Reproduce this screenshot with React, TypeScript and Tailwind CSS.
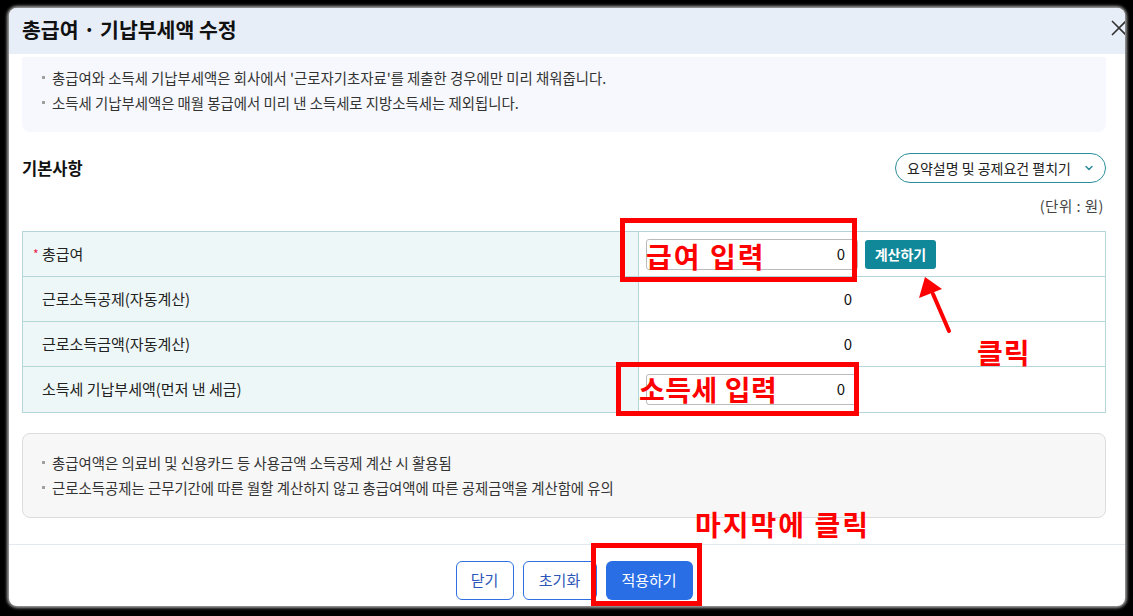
import React from "react";

const FONT = { fontFamily: '"Noto Sans CJK KR", "Noto Sans", "Liberation Sans", sans-serif' };

function Bullet({ children }: { children: React.ReactNode }) {
  return (
    <div className="flex items-center h-[25px] text-[14.4px] text-[#333]">
      <span className="inline-block w-[3px] h-[3px] bg-[#a0a0a0] mr-[7px]" />
      <span>{children}</span>
    </div>
  );
}

function Row({ label, required, children, last }: { label: string; required?: boolean; children: React.ReactNode; last?: boolean }) {
  return (
    <div className={"flex h-[45px] " + (last ? "" : "border-b border-[#b4d6db]")}>
      <div className="w-[616px] bg-[#eef7f7] border-r border-[#b4d6db] flex items-center pl-[10px] text-[15px] text-[#222]">
        {required ? <span className="text-[#e8174a] text-[12px] mr-[2px] w-[7px]">*</span> : <span className="w-[9px]" />}
        <span>{label}</span>
      </div>
      <div className="flex items-center pl-[7px]">{children}</div>
    </div>
  );
}

export default function App() {
  return (
    <div className="relative w-[1133px] h-[616px] bg-black overflow-hidden" style={FONT}>
      <div className="absolute left-[9px] top-[8px] w-[1116px] h-[598px] bg-white rounded-[8px] overflow-hidden shadow-[0_0_3px_2px_rgba(230,230,230,0.7)] flex flex-col">
        {/* header */}
        <div className="relative h-[46px] shrink-0 bg-[#e7eef8] flex items-center pl-[13px] pb-[4px]">
          <span className="text-[20.5px] font-bold text-[#111]">총급여 · 기납부세액 수정</span>
          <svg className="absolute right-[-3px] top-[11px]" width="18" height="18" viewBox="0 0 18 18">
            <path d="M2 2 L16 16 M16 2 L2 16" stroke="#333" strokeWidth="1.6" fill="none" />
          </svg>
        </div>

        <div className="pl-[13px] pr-[19px]">
          {/* info box */}
          <div className="mt-[3px] h-[75px] bg-[#f6f8fd] rounded-b-[8px] pt-[8px] pl-[20px]">
            <Bullet>총급여와 소득세 기납부세액은 회사에서 '근로자기초자료'를 제출한 경우에만 미리 채워줍니다.</Bullet>
            <Bullet>소득세 기납부세액은 매월 봉급에서 미리 낸 소득세로 지방소득세는 제외됩니다.</Bullet>
          </div>

          {/* section title */}
          <div className="mt-[21px] h-[30px] flex items-center justify-between">
            <span className="text-[16.5px] font-bold text-[#111]">기본사항</span>
            <div className="h-[30px] w-[211px] border border-[#2a8c99] rounded-full flex items-center pl-[11px] pr-[10px] justify-between text-[14px] text-[#222]">
              <span>요약설명 및 공제요건 펼치기</span>
              <svg width="12" height="12" viewBox="0 0 12 12">
                <path d="M3 4.5 L6 7.5 L9 4.5" stroke="#2a8c99" strokeWidth="1.5" fill="none" strokeLinecap="round" strokeLinejoin="round" />
              </svg>
            </div>
          </div>

          <div className="mt-[13px] h-[20px] leading-[20px] text-right pr-[2px] text-[14.5px] text-[#444] tracking-[0.5px]">(단위 : 원)</div>

          {/* table */}
          <div className="mt-[15px] border border-[#b4d6db]">
            <Row label="총급여" required>
              <div className="w-[212px] h-[31px] border border-[#bbbbbb] rounded-[3px] flex items-center justify-end pr-[12px] text-[15px] text-[#111]">0</div>
              <div className="ml-[7px] w-[71px] h-[29px] bg-[#11879a] rounded-[3px] flex items-center justify-center text-[14px] font-bold text-white">계산하기</div>
            </Row>
            <Row label="근로소득공제(자동계산)">
              <div className="w-[212px] text-right pr-[6px] text-[15px] text-[#111]">0</div>
            </Row>
            <Row label="근로소득금액(자동계산)">
              <div className="w-[212px] text-right pr-[6px] text-[15px] text-[#111]">0</div>
            </Row>
            <Row label="소득세 기납부세액(먼저 낸 세금)" last>
              <div className="w-[212px] h-[31px] border border-[#bbbbbb] rounded-[3px] flex items-center justify-end pr-[12px] text-[15px] text-[#111]">0</div>
            </Row>
          </div>

          {/* notes */}
          <div className="mt-[20px] h-[85px] border border-[#dcdcdc] bg-[#f7f7f7] rounded-[8px] pt-[16px] pl-[19px]">
            <Bullet>총급여액은 의료비 및 신용카드 등 사용금액 소득공제 계산 시 활용됨</Bullet>
            <Bullet>근로소득공제는 근무기간에 따른 월할 계산하지 않고 총급여액에 따른 공제금액을 계산함에 유의</Bullet>
          </div>
        </div>

        {/* footer */}
        <div className="mt-[26px] border-t border-[#e3e7ee] pt-[16px] flex justify-center pl-[14px] gap-[9px]">
          <div className="w-[58px] h-[39px] border border-[#2f6fe0] rounded-[6px] flex items-center justify-center text-[15px] text-[#2b55b8]">닫기</div>
          <div className="w-[74px] h-[39px] border border-[#2f6fe0] rounded-[6px] flex items-center justify-center text-[15px] text-[#2b55b8]">초기화</div>
          <div className="w-[87px] h-[39px] bg-[#2a6ee6] rounded-[6px] flex items-center justify-center text-[15px] text-white">적용하기</div>
        </div>
      </div>

      {/* red annotations */}
      <div className="absolute left-[620px] top-[218px] w-[237px] h-[64px] border-[5px] border-[#ff0000]" />
      <div className="absolute left-[646px] top-[242px] text-[28px] leading-none font-bold text-[#ff0000] tracking-[2px]">급여 입력</div>
      <div className="absolute left-[616px] top-[362px] w-[243px] h-[54px] border-[5px] border-[#ff0000]" />
      <div className="absolute left-[639px] top-[375px] text-[28px] leading-none font-bold text-[#ff0000] tracking-[0.5px]">소득세 입력</div>
      <div className="absolute left-[977px] top-[338px] text-[28px] leading-none font-bold text-[#ff0000] tracking-[1px]">클릭</div>
      <div className="absolute left-[695px] top-[510px] text-[28px] leading-none font-bold text-[#ff0000] tracking-[2px]">마지막에 클릭</div>
      <div className="absolute left-[591px] top-[543px] w-[111px] h-[63px] border-[5px] border-[#ff0000]" />
      <svg className="absolute left-0 top-0" width="1133" height="616" viewBox="0 0 1133 616">
        <path d="M949 331 L933 294" stroke="#ff0000" strokeWidth="4" strokeLinecap="round" />
        <polygon points="925,277 919,298 942,289" fill="#ff0000" />
      </svg>
    </div>
  );
}
